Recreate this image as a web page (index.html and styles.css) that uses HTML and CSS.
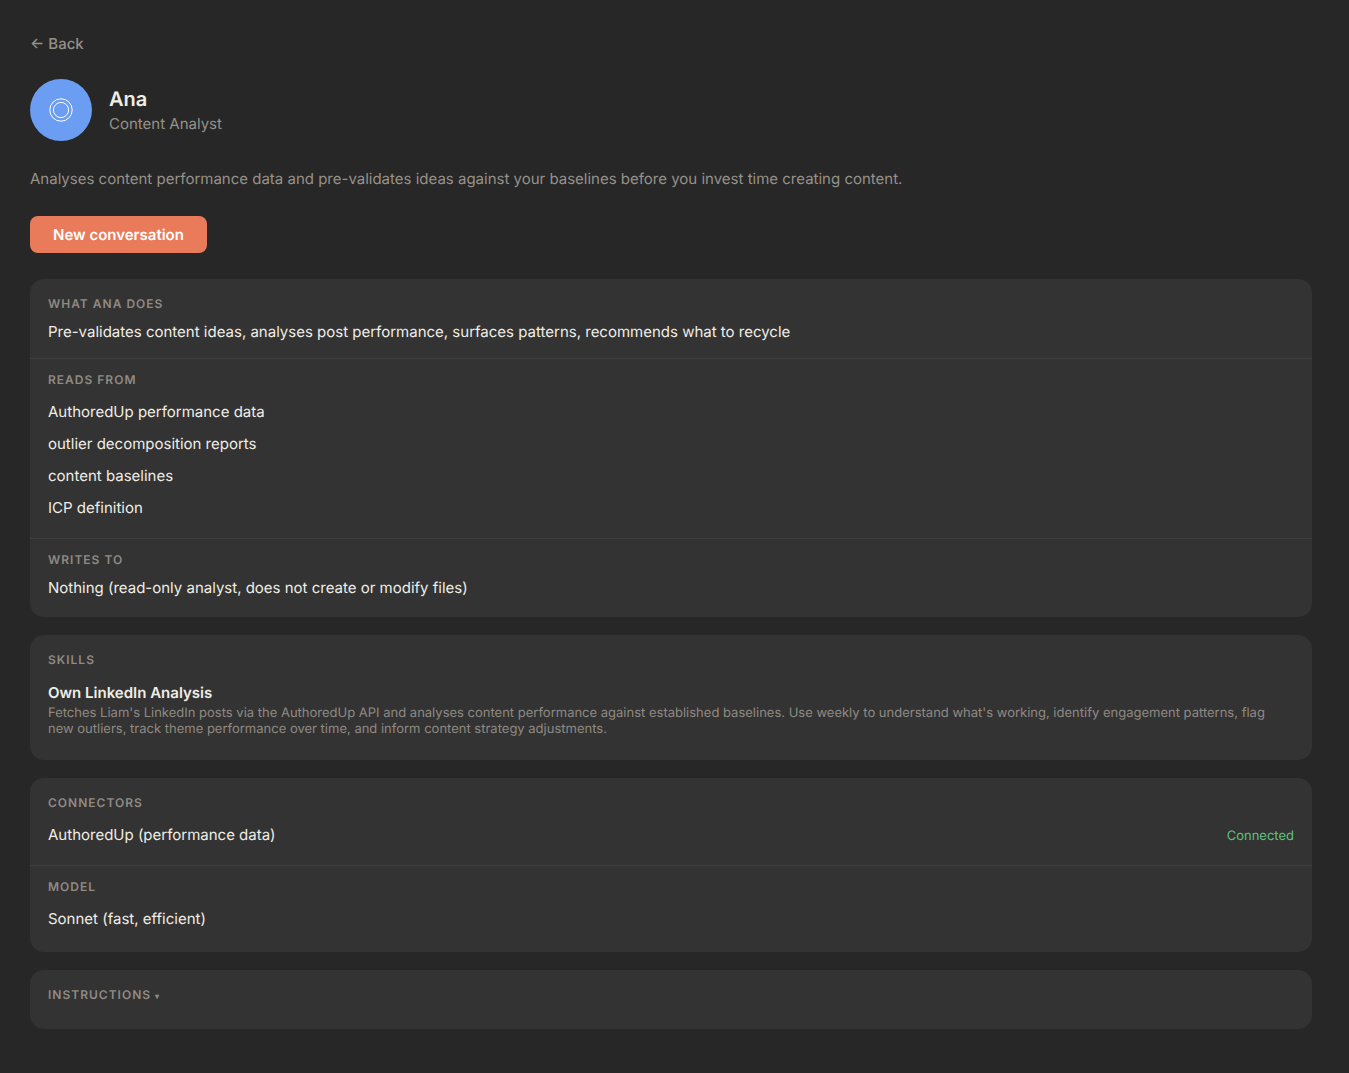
FILE: index.html
```html
<!DOCTYPE html>
<html lang="en">
<head>
    <meta charset="UTF-8">
    <meta name="viewport" content="width=device-width, initial-scale=1.0">
    <title>Ana - Content Analyst</title>
    <link rel="stylesheet" href="styles.css">
</head>
<body>
    <main class="page">
        <a href="#" class="back">← Back</a>

        <header class="profile">
            <div class="avatar">
                <svg width="24" height="24" viewBox="0 0 24 24" fill="none" stroke="currentColor" aria-hidden="true">
                    <circle cx="12" cy="12" r="11.2"/>
                    <circle cx="12" cy="12" r="7.6"/>
                </svg>
            </div>
            <div>
                <h1>Ana</h1>
                <p class="role">Content Analyst</p>
            </div>
        </header>

        <p class="intro">Analyses content performance data and pre-validates ideas against your baselines before you invest time creating content.</p>

        <button type="button" class="new-chat">New conversation</button>

        <div class="card">
            <section>
                <h2>What Ana does</h2>
                <p class="text">Pre-validates content ideas, analyses post performance, surfaces patterns, recommends what to recycle</p>
            </section>
            <section>
                <h2>Reads from</h2>
                <ul>
                    <li>AuthoredUp performance data</li>
                    <li>outlier decomposition reports</li>
                    <li>content baselines</li>
                    <li>ICP definition</li>
                </ul>
            </section>
            <section>
                <h2>Writes to</h2>
                <p class="text">Nothing (read-only analyst, does not create or modify files)</p>
            </section>
        </div>

        <div class="card">
            <section>
                <h2>Skills</h2>
                <ul>
                    <li>
                        <h3>Own LinkedIn Analysis</h3>
                        <p class="desc">Fetches Liam's LinkedIn posts via the AuthoredUp API and analyses content performance against established baselines. Use weekly to understand what's working, identify engagement patterns, flag new outliers, track theme performance over time, and inform content strategy adjustments.</p>
                    </li>
                </ul>
            </section>
        </div>

        <div class="card">
            <section>
                <h2>Connectors</h2>
                <ul>
                    <li class="connector">AuthoredUp (performance data) <span class="status">Connected</span></li>
                </ul>
            </section>
            <section>
                <h2>Model</h2>
                <ul>
                    <li>Sonnet (fast, efficient)</li>
                </ul>
            </section>
        </div>

        <div class="card">
            <section>
                <h2><button type="button" class="toggle" aria-expanded="false">Instructions <span class="caret">▾</span></button></h2>
            </section>
        </div>
    </main>
</body>
</html>
```
FILE: styles.css
```css
* {
    box-sizing: border-box;
}
body {
    margin: 0;
    background: #272727;
    color: #f0ede6;
    font-family: Inter, "Liberation Sans", sans-serif;
    font-size: 15px;
    line-height: 20px;
    text-rendering: geometricPrecision;
}
h1, h2, h3, p, ul {
    margin: 0;
    padding: 0;
}
ul {
    list-style: none;
}
.page {
    padding: 34px 37px 44px 30px;
}
.back {
    display: block;
    width: fit-content;
    color: #96918a;
    font-weight: 500;
    text-decoration: none;
}
.profile {
    display: flex;
    align-items: center;
    gap: 17px;
    margin: 25px 0 26px;
}
.avatar {
    display: flex;
    align-items: center;
    justify-content: center;
    width: 62px;
    height: 62px;
    border-radius: 50%;
    background: #6b9df2;
    color: #fff;
}
h1 {
    margin-bottom: 2px;
    font-size: 20px;
    font-weight: 600;
    line-height: 26px;
}
.role, .intro {
    color: #96918a;
}
.intro {
    line-height: 24px;
}
.new-chat {
    display: block;
    height: 37px;
    margin: 25px 0 26px;
    padding: 0 23px;
    border: none;
    border-radius: 8px;
    background: #ea7b5a;
    color: #fff;
    font: inherit;
    font-weight: 600;
    text-rendering: inherit;
    cursor: pointer;
}
.card {
    margin-bottom: 18px;
    padding: 4px 0 3px;
    border-radius: 14px;
    background: #333;
}
.card:last-child {
    margin-bottom: 0;
}
section {
    padding: 14px 18px;
}
section + section {
    border-top: 1px solid #3e3e3e;
}
h2 {
    margin-bottom: 9px;
    color: #8f8a83;
    font-size: 12px;
    font-weight: 600;
    line-height: 14px;
    letter-spacing: 1px;
    text-transform: uppercase;
}
.text {
    line-height: 24px;
}
li {
    padding: 6px 0;
}
h3 {
    margin-bottom: 1px;
    font-size: 15px;
    font-weight: 600;
    line-height: 22px;
}
.desc {
    color: #8f8a83;
    font-size: 13px;
    line-height: 16px;
}
.connector {
    display: flex;
    align-items: baseline;
    justify-content: space-between;
}
.status {
    color: #5fc27e;
    font-size: 13px;
    line-height: 16px;
}
.toggle {
    display: block;
    padding: 0;
    border: none;
    background: none;
    color: inherit;
    font: inherit;
    letter-spacing: inherit;
    text-rendering: inherit;
    text-transform: inherit;
    cursor: pointer;
}
.caret {
    font-size: 8px;
}
```
